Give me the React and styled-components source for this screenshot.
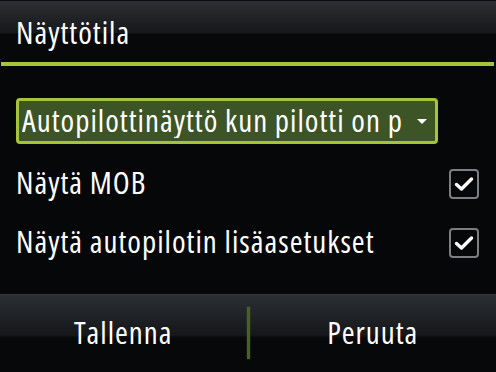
import styled, { createGlobalStyle } from "styled-components";

const Global = createGlobalStyle`
  html, body { margin: 0; padding: 0; background: #060708; }
  body {
    font-family: "Open Sans", "Noto Sans", sans-serif;
    font-stretch: 75%;
    letter-spacing: 1px;
    color: #fff;
  }
`;

const Screen = styled.div`
  width: 496px;
  height: 372px;
  display: flex;
  flex-direction: column;
  background: #060708;
  overflow: hidden;
`;

const Header = styled.div`
  height: 62px;
  padding: 0 16px;
  display: flex;
  align-items: center;
  border-top: 1px solid #0c0d0e;
  background: linear-gradient(180deg, #2c2f33 0%, #16181b 52%, #07080a 54%, #07080a 100%);
  box-sizing: border-box;
`;

const Title = styled.h1`
  margin: 0;
  font-size: 31px;
  font-weight: 400;
  line-height: 1;
  padding-top: 2px;
`;

const Rule = styled.div`
  height: 4px;
  margin: 0 2px 0 1px;
  background: #a6c43a;
`;

const Body = styled.div`
  flex: 1;
  padding: 32px 16px 0 16px;
  display: flex;
  flex-direction: column;
`;

const Select = styled.div`
  width: 422px;
  height: 46px;
  box-sizing: border-box;
  border: 3px solid #a6c43a;
  border-radius: 4px;
  background: #3d5426;
  display: flex;
  align-items: center;
  padding: 0 8px 0 3px;
  gap: 14px;
`;

const SelectText = styled.span`
  flex: 1;
  font-size: 31px;
  line-height: 1;
  white-space: nowrap;
  overflow: hidden;
  text-overflow: clip;
  padding-bottom: 2px;
`;

const Caret = styled.span`
  width: 0;
  height: 0;
  border-left: 5px solid transparent;
  border-right: 5px solid transparent;
  border-top: 5px solid #fff;
`;

const Row = styled.div`
  height: 59px;
  display: flex;
  align-items: center;
  justify-content: space-between;
  padding-right: 1px;
  margin-top: ${(p) => p.$first ? "10px" : "0"};
`;

const Label = styled.span`
  font-size: 31px;
  line-height: 1;
  padding-bottom: 2px;
`;

const Box = styled.div`
  width: 30px;
  height: 30px;
  box-sizing: border-box;
  border: 2px solid #7c7f82;
  border-radius: 4px;
  display: flex;
  align-items: center;
  justify-content: center;
`;

const Footer = styled.div`
  height: 78px;
  display: flex;
  align-items: center;
  border-top: 1px solid #33373c;
  background: linear-gradient(180deg, #2b2f34 0%, #15171a 52%, #07080a 56%, #07080a 100%);
  box-sizing: border-box;
`;

const FooterButton = styled.button`
  flex: 1;
  height: 100%;
  background: none;
  border: none;
  color: #fff;
  font-family: inherit;
  font-stretch: inherit;
  letter-spacing: inherit;
  font-size: 31px;
  line-height: 1;
  padding: 0 0 2px 0;
  cursor: pointer;
`;

const Divider = styled.div`
  width: 3px;
  height: 52px;
  background: #4a6126;
  box-shadow: 0 0 2px rgba(90, 120, 40, 0.6);
  margin-top: -2px;
`;

function Check() {
  return (
    <svg width="20" height="16" viewBox="0 0 20 16">
      <path d="M2.5 8.5 L7.5 13 L17.5 3" fill="none" stroke="#fff" strokeWidth="3.4" strokeLinecap="round" strokeLinejoin="round" />
    </svg>
  );
}

export default function App() {
  return (
    <Screen>
      <Global />
      <Header>
        <Title>Näyttötila</Title>
      </Header>
      <Rule />
      <Body>
        <Select>
          <SelectText>Autopilottinäyttö kun pilotti on päällä</SelectText>
          <Caret />
        </Select>
        <Row $first>
          <Label>Näytä MOB</Label>
          <Box><Check /></Box>
        </Row>
        <Row>
          <Label>Näytä autopilotin lisäasetukset</Label>
          <Box><Check /></Box>
        </Row>
      </Body>
      <Footer>
        <FooterButton>Tallenna</FooterButton>
        <Divider />
        <FooterButton>Peruuta</FooterButton>
      </Footer>
    </Screen>
  );
}
